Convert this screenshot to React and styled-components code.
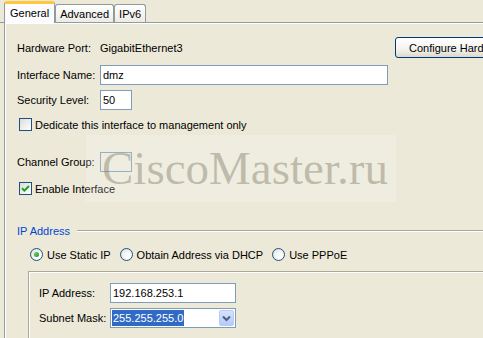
import React from "react";
import styled, { createGlobalStyle } from "styled-components";

const GlobalStyle = createGlobalStyle`
  html, body {
    margin: 0;
    padding: 0;
    background: #ece9d8;
  }
  body {
    font-family: "Liberation Sans", Arial, sans-serif;
    font-size: 11px;
    color: #000;
  }
`;

const App = () => {
  return (
    <Page>
      <GlobalStyle />
      <TabStrip>
        <Tab $active>General</Tab>
        <Tab>Advanced</Tab>
        <Tab>IPv6</Tab>
      </TabStrip>
      <Panel>
        <Row $h={21}>
          <Label>Hardware Port:</Label>
          <Value>GigabitEthernet3</Value>
          <Button>Configure Hardware Properties...</Button>
        </Row>
        <Row $h={20} $mt={7}>
          <Label>Interface Name:</Label>
          <TextField $w={288} defaultValue="dmz" readOnly />
        </Row>
        <Row $h={20} $mt={5}>
          <Label>Security Level:</Label>
          <TextField $w={32} defaultValue="50" readOnly />
        </Row>
        <CheckRow $mt={8}>
          <CheckBox />
          <span>Dedicate this interface to management only</span>
        </CheckRow>
        <Row $h={20} $mt={21}>
          <Label>Channel Group:</Label>
          <EmptyBox />
        </Row>
        <CheckRow $mt={10}>
          <CheckBox $checked>
            <svg width="9" height="9" viewBox="0 0 9 9">
              <path d="M1 4.2 L3.4 6.6 L8 2" fill="none" stroke="#21a121" strokeWidth="2" />
            </svg>
          </CheckBox>
          <span>Enable Interface</span>
        </CheckRow>

        <Legend>
          <LegendText>IP Address</LegendText>
          <LegendLine />
        </Legend>
        <RadioRow>
          <RadioOption>
            <Radio $checked />
            <span>Use Static IP</span>
          </RadioOption>
          <RadioOption>
            <Radio />
            <span>Obtain Address via DHCP</span>
          </RadioOption>
          <RadioOption>
            <Radio />
            <span>Use PPPoE</span>
          </RadioOption>
        </RadioRow>
        <InnerBox>
          <Row $h={20}>
            <Label $w={71}>IP Address:</Label>
            <TextField $w={126} defaultValue="192.168.253.1" readOnly />
          </Row>
          <Row $h={20} $mt={5}>
            <Label $w={71}>Subnet Mask:</Label>
            <Combo>
              <Selected>255.255.255.0</Selected>
              <DropButton>
                <svg width="9" height="7" viewBox="0 0 9 7">
                  <path d="M1 1.5 L4.5 5 L8 1.5" fill="none" stroke="#4d6185" strokeWidth="2" />
                </svg>
              </DropButton>
            </Combo>
          </Row>
        </InnerBox>
      </Panel>
      <Watermark>CiscoMaster.ru</Watermark>
    </Page>
  );
};

const Page = styled.div`
  position: relative;
  width: 483px;
  height: 338px;
  overflow: hidden;
  background: #ece9d8;
`;

const TabStrip = styled.div`
  display: flex;
  align-items: flex-end;
  height: 22px;
  padding-left: 4px;
  border-bottom: 1px solid #919b9c;
`;

const Tab = styled.div`
  box-sizing: border-box;
  display: flex;
  align-items: center;
  height: ${(p) => (p.$active ? 22 : 18)}px;
  margin-bottom: ${(p) => (p.$active ? -1 : 0)}px;
  padding: ${(p) => (p.$active ? "0 5px 1px" : "0 4px")};
  border: 1px solid #919b9c;
  border-bottom: none;
  border-top: ${(p) => (p.$active ? "3px solid #ffc83c" : "1px solid #919b9c")};
  border-radius: 3px 3px 0 0;
  background: ${(p) => (p.$active ? "#fcfcfe" : "linear-gradient(#ffffff, #ecebe6)")};
  position: relative;
  z-index: ${(p) => (p.$active ? 2 : 1)};
  white-space: nowrap;
`;

const Panel = styled.div`
  margin-left: 4px;
  height: 315px;
  border-left: 1px solid #919b9c;
  box-shadow: inset 1px 1px 0 #ffffff;
  padding: 14px 0 0 12px;
`;

const Row = styled.div`
  display: flex;
  align-items: center;
  height: ${(p) => p.$h}px;
  margin-top: ${(p) => p.$mt || 0}px;
  white-space: nowrap;
`;

const Label = styled.span`
  flex: none;
  width: ${(p) => p.$w || 83}px;
`;

const Value = styled.span`
  flex: none;
  width: 295px;
`;

const Button = styled.div`
  flex: none;
  box-sizing: border-box;
  height: 21px;
  display: flex;
  align-items: center;
  padding: 0 13px;
  border: 1px solid #003c74;
  border-radius: 3px;
  background: linear-gradient(#ffffff 0%, #f4f3ee 60%, #dcd8cb 100%);
`;

const TextField = styled.input`
  box-sizing: border-box;
  width: ${(p) => p.$w}px;
  height: 20px;
  margin: 0;
  padding: 0 2px;
  border: 1px solid #7f9db9;
  background: #ffffff;
  font: inherit;
  color: #000;
  outline: none;
`;

const EmptyBox = styled.div`
  box-sizing: border-box;
  width: 32px;
  height: 20px;
  border: 1px solid #7f9db9;
`;

const CheckRow = styled.div`
  display: flex;
  align-items: center;
  gap: 3px;
  height: 13px;
  margin-top: ${(p) => p.$mt}px;
  padding-left: 2px;
  white-space: nowrap;
`;

const CheckBox = styled.div`
  box-sizing: border-box;
  width: 13px;
  height: 13px;
  flex: none;
  display: flex;
  align-items: center;
  justify-content: center;
  border: 1px solid #1c5180;
  background: linear-gradient(135deg, #dcdcd7, #ffffff);
`;

const Legend = styled.div`
  display: flex;
  align-items: center;
  height: 13px;
  margin-top: 29px;
`;

const LegendText = styled.span`
  color: #0046d5;
`;

const LegendLine = styled.div`
  flex: 1;
  margin-left: 7px;
  border-top: 1px solid #aca899;
  border-bottom: 1px solid #ffffff;
`;

const RadioRow = styled.div`
  display: flex;
  align-items: center;
  gap: 9px;
  height: 13px;
  margin-top: 11px;
  padding-left: 13px;
  white-space: nowrap;
`;

const RadioOption = styled.div`
  display: flex;
  align-items: center;
  gap: 4px;
`;

const Radio = styled.div`
  box-sizing: border-box;
  width: 13px;
  height: 13px;
  flex: none;
  border-radius: 50%;
  border: 1px solid #1c5180;
  background: radial-gradient(circle at 65% 65%, #ffffff 20%, #dcdcd7 90%);
  display: flex;
  align-items: center;
  justify-content: center;

  &::after {
    content: "";
    display: ${(p) => (p.$checked ? "block" : "none")};
    width: 5px;
    height: 5px;
    border-radius: 50%;
    background: radial-gradient(circle at 35% 35%, #5fd35f, #1c8a1c);
  }
`;

const InnerBox = styled.div`
  margin: 10px 0 0 11px;
  height: 80px;
  border-top: 1px solid #aca899;
  border-left: 1px solid #aca899;
  box-shadow: inset 1px 1px 0 #ffffff;
  padding: 11px 0 0 10px;
`;

const Combo = styled.div`
  box-sizing: border-box;
  width: 126px;
  height: 20px;
  padding: 1px;
  display: flex;
  align-items: stretch;
  border: 1px solid #7f9db9;
  background: #ffffff;
`;

const Selected = styled.span`
  display: flex;
  align-items: center;
  padding: 0 1px;
  background: #316ac5;
  color: #ffffff;
`;

const DropButton = styled.div`
  box-sizing: border-box;
  width: 15px;
  margin-left: auto;
  display: flex;
  align-items: center;
  justify-content: center;
  border: 1px solid #b9cbf3;
  border-radius: 2px;
  background: linear-gradient(#d6e2fd, #b6cafa);
`;

const Watermark = styled.div`
  position: absolute;
  left: 86px;
  top: 135px;
  width: 310px;
  height: 67px;
  padding-left: 16px;
  box-sizing: border-box;
  background: rgba(255, 255, 255, 0.2);
  font-family: "Liberation Serif", "Times New Roman", serif;
  font-size: 47px;
  line-height: 67px;
  color: rgba(110, 104, 84, 0.38);
  white-space: nowrap;
  pointer-events: none;
`;

export default App;
